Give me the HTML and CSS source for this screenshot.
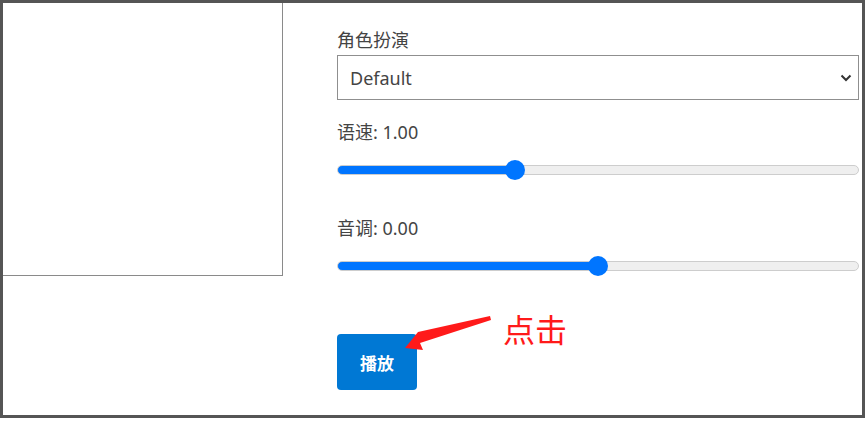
FILE: index.html
```html
<!DOCTYPE html>
<html lang="zh">
<head>
<meta charset="utf-8">
<title>TTS</title>
<link rel="stylesheet" href="styles.css">
</head>
<body>
<div class="frame">
  <div class="preview"></div>
  <div class="controls">
    <label class="field-label">角色扮演</label>
    <div class="select-wrap">
      <select class="select">
        <option>Default</option>
      </select>
      <svg class="chevron" width="12" height="8" viewBox="0 0 12 8"><path d="M1.5 1.5 L6 6 L10.5 1.5" fill="none" stroke="#333" stroke-width="2"/></svg>
    </div>
    <label class="field-label rate-label">语速: 1.00</label>
    <input class="slider" type="range" min="0.5" max="2" step="0.01" value="1" style="--p:0.3333">
    <label class="field-label pitch-label">音调: 0.00</label>
    <input class="slider" type="range" min="-1" max="1" step="0.01" value="0" style="--p:0.5">
    <button class="play">播放</button>
  </div>
  <svg class="arrow" width="865" height="425" viewBox="0 0 865 425">
    <polygon points="490,316 418,332 405,348 423,350 420,343 491,320" fill="#ff1a1a"/>
  </svg>
  <div class="note">点击</div>
</div>
</body>
</html>
```
FILE: styles.css
```css
html, body {
  margin: 0;
  padding: 0;
  background: #fff;
}
body {
  width: 865px;
  height: 425px;
  overflow: hidden;
  font-family: "Noto Sans", "Noto Sans CJK SC", sans-serif;
  color: #444;
}
.frame {
  position: relative;
  box-sizing: border-box;
  width: 865px;
  height: 418px;
  border: 3px solid #555;
  display: flex;
  align-items: flex-start;
}
.preview {
  flex: none;
  box-sizing: border-box;
  width: 280px;
  height: 273px;
  border-right: 1px solid #8a8a8a;
  border-bottom: 1px solid #8a8a8a;
}
.controls {
  flex: none;
  width: 522px;
  margin-left: 54px;
  padding-top: 24px;
  display: flex;
  flex-direction: column;
  align-items: stretch;
}
.field-label {
  font-size: 18px;
  line-height: 26px;
  height: 26px;
  color: #444;
}
.select-wrap {
  position: relative;
  margin-top: 2px;
}
.select {
  -webkit-appearance: none;
  appearance: none;
  box-sizing: border-box;
  width: 100%;
  height: 45px;
  border: 1px solid #8f8f8f;
  border-radius: 0;
  background: #fff;
  padding: 0 0 0 12px;
  font-family: "Noto Sans", "Noto Sans CJK SC", sans-serif;
  font-size: 18px;
  color: #444;
  outline: none;
}
.chevron {
  position: absolute;
  right: 7px;
  top: 19px;
}
.rate-label {
  margin-top: 19px;
}
.pitch-label {
  margin-top: 34px;
}
.slider {
  -webkit-appearance: none;
  appearance: none;
  display: block;
  width: 100%;
  height: 22px;
  margin: 14px 0 0 0;
  padding: 0;
  background: transparent;
}
.slider::-webkit-slider-runnable-track {
  height: 10px;
  box-sizing: border-box;
  border: 1px solid #cdcdcd;
  border-radius: 5px;
  background: linear-gradient(to right, #0075ff calc(10px + (100% - 20px) * var(--p)), #efefef calc(10px + (100% - 20px) * var(--p)));
}
.slider::-webkit-slider-thumb {
  -webkit-appearance: none;
  appearance: none;
  width: 20px;
  height: 20px;
  border-radius: 50%;
  background: #0075ff;
  border: none;
  margin-top: -6px;
}
.play {
  align-self: flex-start;
  margin-top: 57px;
  width: 80px;
  height: 56px;
  border: none;
  border-radius: 4px;
  background: #0078d4;
  color: #fff;
  font-family: "Noto Sans CJK SC", sans-serif;
  font-weight: 700;
  font-size: 17px;
}
.arrow {
  position: absolute;
  left: -3px;
  top: -3px;
  pointer-events: none;
}
.note {
  position: absolute;
  left: 500px;
  top: 303px;
  font-family: "Noto Sans CJK SC", sans-serif;
  font-size: 32px;
  line-height: 44px;
  color: #ff1a1a;
}
```
